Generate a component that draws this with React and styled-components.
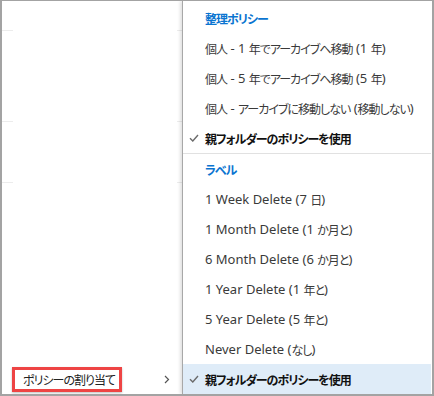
import styled, { createGlobalStyle } from "styled-components";

const GlobalStyle = createGlobalStyle`
  html, body {
    margin: 0;
    padding: 0;
    background: #fff;
  }
  body {
    font-family: "Noto Sans", "Noto Sans CJK JP", sans-serif;
    font-feature-settings: "palt";
  }
`;

const policies = [
  "個人 - 1 年でアーカイブへ移動 (1 年)",
  "個人 - 5 年でアーカイブへ移動 (5 年)",
  "個人 - アーカイブに移動しない (移動しない)",
];

const labels = [
  "1 Week Delete (7 日)",
  "1 Month Delete (1 か月と)",
  "6 Month Delete (6 か月と)",
  "1 Year Delete (1 年と)",
  "5 Year Delete (5 年と)",
  "Never Delete (なし)",
];

// split a label into latin and japanese runs so each gets its own metrics
const Txt = ({ children }) =>
  children
    .split(/([\u3000-\u9fff\uff00-\uffef]+)/)
    .filter(Boolean)
    .map((part, i) =>
      /[\u3000-\u9fff\uff00-\uffef]/.test(part) ? (
        <Jp key={i}>{part}</Jp>
      ) : (
        <span key={i}>{part}</span>
      )
    );

const Check = () => (
  <svg width="10" height="8" viewBox="0 0 10 8">
    <path d="M1 4.2 L3.8 7 L9 1" fill="none" stroke="#6b6b6b" strokeWidth="1.4" />
  </svg>
);

const Chevron = () => (
  <svg width="6" height="9" viewBox="0 0 6 9">
    <path d="M1 1 L4.5 4.5 L1 8" fill="none" stroke="#555" strokeWidth="1.2" />
  </svg>
);

const App = () => {
  return (
    <>
      <GlobalStyle />
      <Frame>
        <LeftPane>
          <Stub top={29} />
          <Stub top={90} />
          <Stub top={60} />
          <Spacer />
          <AssignRow>
            <Highlight>
              <Txt>ポリシーの割り当て</Txt>
            </Highlight>
            <Chevron />
          </AssignRow>
        </LeftPane>
        <Menu>
          <Header>
            <Txt>整理ポリシー</Txt>
          </Header>
          {policies.map((p) => (
            <Item key={p}>
              <Mark />
              <Txt>{p}</Txt>
            </Item>
          ))}
          <Item bold>
            <Mark>
              <Check />
            </Mark>
            <Txt>親フォルダーのポリシーを使用</Txt>
          </Item>
          <Separator />
          <Header>
            <Txt>ラベル</Txt>
          </Header>
          {labels.map((l) => (
            <Item key={l}>
              <Mark />
              <Txt>{l}</Txt>
            </Item>
          ))}
          <Item bold selected>
            <Mark>
              <Check />
            </Mark>
            <Txt>親フォルダーのポリシーを使用</Txt>
          </Item>
        </Menu>
      </Frame>
    </>
  );
};

export default App;

const Frame = styled.div`
  width: 434px;
  height: 396px;
  box-sizing: border-box;
  border-style: solid;
  border-color: #a3a3a3;
  border-width: 1px 2px 2px 2px;
  display: flex;
  background: #fff;
  overflow: hidden;
`;

const LeftPane = styled.div`
  width: 180px;
  flex-shrink: 0;
  display: flex;
  flex-direction: column;
`;

const Stub = styled.div`
  margin-top: ${(p) => p.top}px;
  height: 1px;
  display: flex;
  justify-content: space-between;

  &::before,
  &::after {
    content: "";
    height: 1px;
    background: #ececec;
  }
  &::before {
    width: 11px;
  }
  &::after {
    width: 5px;
  }
`;

const Spacer = styled.div`
  flex: 1;
`;

const Jp = styled.span`
  font-family: "Noto Sans CJK JP", sans-serif;
  font-size: 12px;
  letter-spacing: -1px;
`;

const AssignRow = styled.div`
  height: 30px;
  display: flex;
  align-items: center;
  justify-content: space-between;
  padding: 0 12px 0 10px;
`;

const Highlight = styled.span`
  box-sizing: border-box;
  width: 110px;
  height: 25px;
  border: 3px solid #ee4444;
  padding-left: 8px;
  display: flex;
  align-items: center;
  white-space: nowrap;
  font-size: 12px;
  color: #222;
  box-shadow: 0 1px 2px rgba(0, 0, 0, 0.25);
`;

const Menu = styled.div`
  flex: 1;
  min-width: 0;
  display: flex;
  flex-direction: column;
  padding: 2px 1px 0 0;
  border-left: 1px solid #a8a8a8;
  box-shadow: -2px 0 3px rgba(0, 0, 0, 0.12);
  background: #fff;
`;

const Header = styled.div`
  height: 30px;
  display: flex;
  align-items: center;
  padding-left: 22px;
  font-size: 12px;
  font-weight: 700;
  color: #0a74d0;
`;

const Item = styled.div`
  height: 30px;
  display: flex;
  align-items: center;
  white-space: pre;
  font-size: 13px;
  font-weight: ${(p) => (p.bold ? 700 : 400)};
  color: ${(p) => (p.bold ? "#111" : "#3a3a3a")};
  background: ${(p) => (p.selected ? "#dfecf8" : "transparent")};
`;

const Mark = styled.span`
  width: 22px;
  flex-shrink: 0;
  padding-left: 6px;
  box-sizing: border-box;
  display: flex;
  align-items: center;
`;

const Separator = styled.div`
  height: 1px;
  background: #e1e1e1;
`;
